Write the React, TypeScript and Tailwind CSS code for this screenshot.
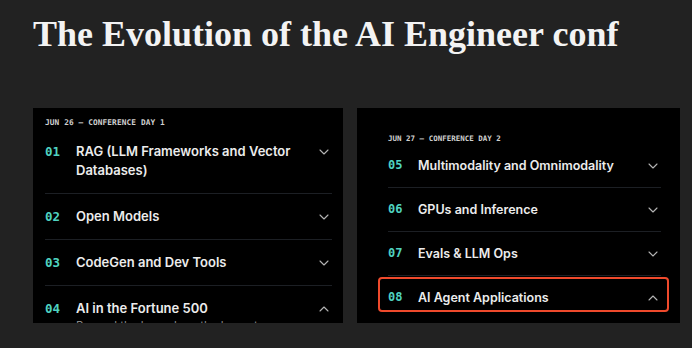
import { ChevronDown, ChevronUp } from 'lucide-react';

type Track = { num: string; title: string; open?: boolean; desc?: string };

const day1: Track[] = [
  { num: '01', title: 'RAG (LLM Frameworks and Vector Databases)' },
  { num: '02', title: 'Open Models' },
  { num: '03', title: 'CodeGen and Dev Tools' },
  {
    num: '04',
    title: 'AI in the Fortune 500',
    open: true,
    desc: 'Beyond the hype: how the largest companies deploy AI in production and at scale.',
  },
];

const day2: Track[] = [
  { num: '05', title: 'Multimodality and Omnimodality' },
  { num: '06', title: 'GPUs and Inference' },
  { num: '07', title: 'Evals & LLM Ops' },
  { num: '08', title: 'AI Agent Applications', open: true },
];

const mono = { fontFamily: '"DejaVu Sans Mono", "Liberation Mono", monospace' };

function Row({ t, size, first }: { t: Track; size: 'lg' | 'sm'; first?: boolean }) {
  const lg = size === 'lg';
  return (
    <div className={first ? (lg ? 'mt-[1px]' : '') : 'border-t border-[#1c1f24]'}>
      <div className={lg ? 'flex items-start py-[13px]' : 'flex items-start py-[12px]'}>
        <span
          className={
            lg
              ? 'w-[31px] shrink-0 text-[12.5px] leading-[19px] font-bold text-[#4fd3c0]'
              : 'w-[30px] shrink-0 text-[12px] leading-[19px] font-bold text-[#4fd3c0]'
          }
          style={mono}
        >
          {t.num}
        </span>
        <span
          className={
            lg
              ? 'flex-1 pr-4 text-[13px] leading-[19px] font-semibold text-[#ececec]'
              : 'flex-1 pr-2 text-[12.5px] leading-[19px] font-semibold text-[#ececec]'
          }
        >
          {t.title}
        </span>
        <span className="flex h-[19px] items-center text-[#b5b5b5]">
          {t.open ? <ChevronUp size={16} strokeWidth={1.6} /> : <ChevronDown size={16} strokeWidth={1.6} />}
        </span>
      </div>
      {t.open && t.desc && (
        <p className="-mt-[14px] pl-[31px] pr-8 text-[11.5px] leading-[18px] text-[#8a8a8a]">{t.desc}</p>
      )}
    </div>
  );
}

export default function App() {
  return (
    <div
      className="h-[348px] w-[692px] overflow-hidden bg-[#222222]"
      style={{ fontFamily: 'Inter, "Noto Sans", sans-serif' }}
    >
      <h1
        className="pl-[33px] pt-[16px] text-[36px] leading-[36px] font-bold text-[#f3f3f3]"
        style={{ fontFamily: '"Liberation Serif", serif' }}
      >
        The Evolution of the AI Engineer conf
      </h1>

      <div className="mt-[56px] flex gap-[14px] pl-[33px]">
        <section className="h-[215px] w-[310px] overflow-hidden bg-black pl-[12px] pr-[11px] pt-[10px]">
          <div className="text-[7.8px] leading-[10px] font-bold tracking-[0.1px] text-[#d0d0d0]" style={mono}>
            JUN 26 — CONFERENCE DAY 1
          </div>
          {day1.map((t, i) => (
            <Row key={t.num} t={t} size="lg" first={i === 0} />
          ))}
        </section>

        <section className="relative h-[215px] w-[323px] overflow-hidden bg-black pl-[31px] pr-[19px] pt-[26px]">
          <div className="text-[7.5px] leading-[10px] font-bold text-[#d0d0d0]" style={mono}>
            JUN 27 — CONFERENCE DAY 2
          </div>
          {day2.map((t, i) => (
            <Row key={t.num} t={t} size="sm" first={i === 0} />
          ))}
          <div className="pointer-events-none absolute left-[21px] top-[169px] h-[35px] w-[291px] rounded-[4px] border-2 border-[#ef4a2c]" />
        </section>
      </div>
    </div>
  );
}
